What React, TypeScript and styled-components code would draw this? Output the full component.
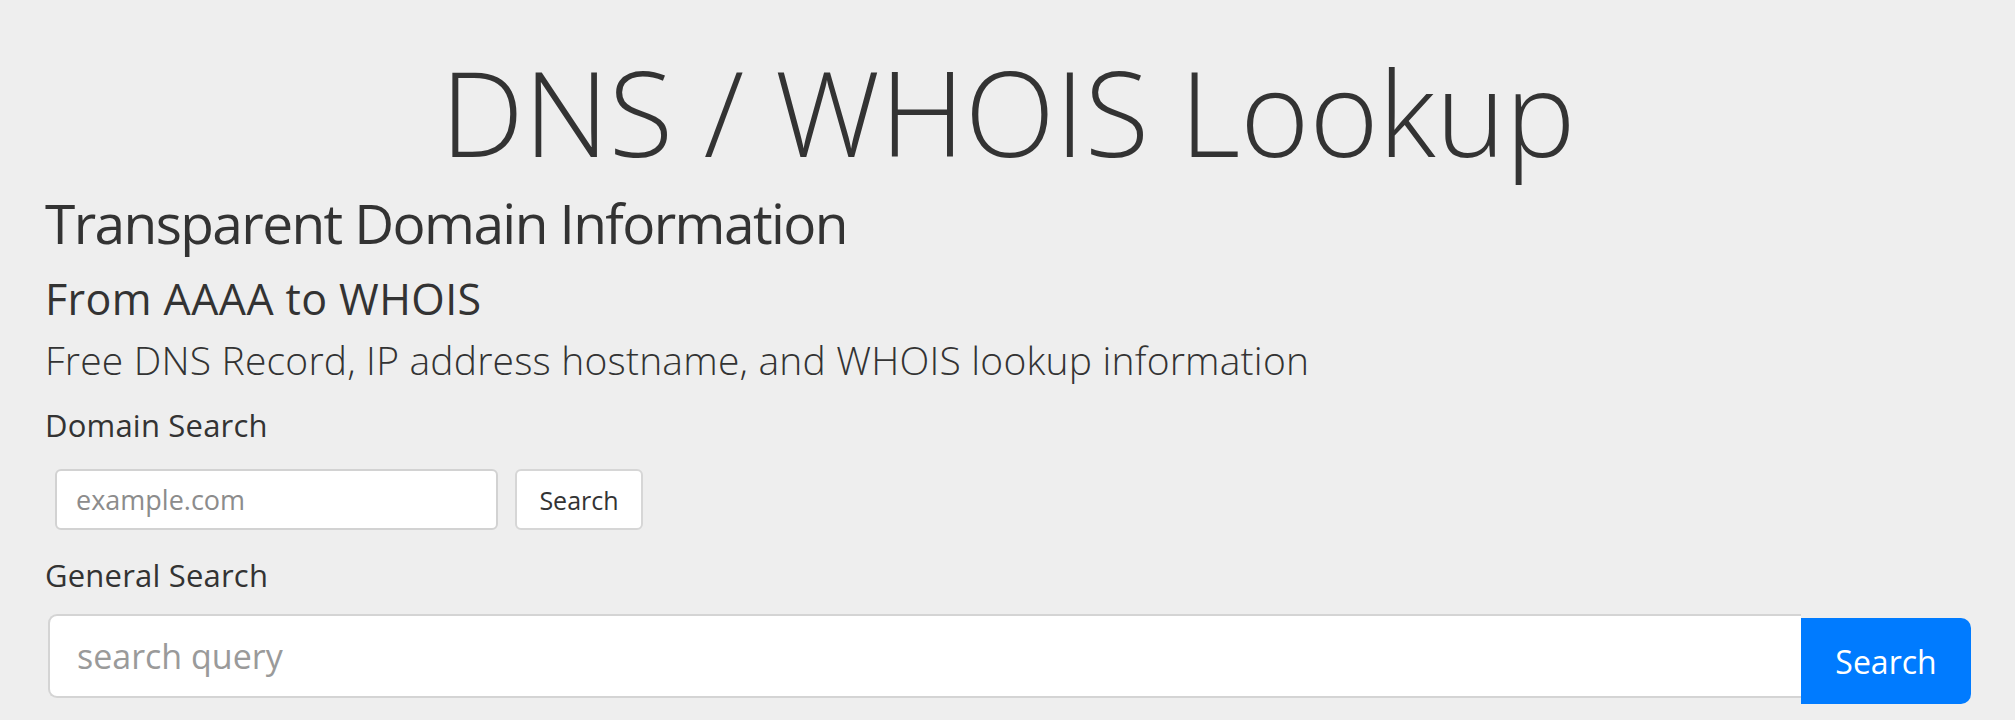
import { createGlobalStyle, styled } from 'styled-components';

const GlobalStyle = createGlobalStyle`
  html,
  body {
    margin: 0;
    padding: 0;
    background: #eeeeee;
  }

  body {
    font-family: 'Open Sans', 'Noto Sans', sans-serif;
    color: #333333;
  }

  * {
    box-sizing: border-box;
  }
`;

const Page = styled.main`
  padding: 47px 44px 0 45px;
`;

const Title = styled.h1`
  margin: 0;

  text-align: center;
  font-size: 118px;
  font-weight: 300;
  line-height: 130px;
`;

const Heading = styled.h2<{
  $size: number;
  $lineHeight: number;
  $gap: number;
  $weight?: number;
  $tracking?: number;
}>`
  margin: ${(p) => p.$gap}px 0 0;

  font-size: ${(p) => p.$size}px;
  font-weight: ${(p) => p.$weight ?? 400};
  line-height: ${(p) => p.$lineHeight}px;
  letter-spacing: ${(p) => p.$tracking ?? 0}px;
`;

const FieldLabel = styled.label<{ $gap: number }>`
  display: block;
  margin-top: ${(p) => p.$gap}px;

  font-size: 31px;
  line-height: 40px;
  letter-spacing: 0.2px;
`;

const DomainForm = styled.form`
  display: flex;
  align-items: stretch;
  gap: 17px;

  height: 61px;
  margin: 24px 0 0 10px;
`;

const DomainInput = styled.input`
  width: 443px;
  padding: 0 19px;

  border: 2px solid #d2d2d2;
  border-radius: 6px;
  background: #ffffff;

  font-family: inherit;
  font-size: 27px;
  color: #333333;

  &::placeholder {
    color: #8c8c8c;
  }
`;

const OutlineButton = styled.button`
  width: 128px;

  border: 2px solid #d6d6d6;
  border-radius: 6px;
  background: #ffffff;

  font-family: inherit;
  font-size: 25px;
  color: #333333;
`;

const GeneralForm = styled.form`
  display: flex;
  align-items: flex-start;

  margin: 19px 0 0 3px;
`;

const GeneralInput = styled.input`
  flex: 1;
  height: 84px;
  padding: 0 27px;

  border: 2px solid #d4d4d4;
  border-right: none;
  border-radius: 9px 0 0 9px;
  background: #ffffff;

  font-family: inherit;
  font-size: 34px;
  color: #333333;

  &::placeholder {
    color: #9a9a9a;
  }
`;

const PrimaryButton = styled.button`
  width: 170px;
  height: 86px;
  margin-top: 4px;

  border: none;
  border-radius: 0 10px 10px 0;
  background: #007bff;

  font-family: inherit;
  font-size: 32px;
  color: #ffffff;
`;

const App = () => {
  return (
    <>
      <GlobalStyle />
      <Page>
        <Title>DNS / WHOIS Lookup</Title>
        <Heading $size={55} $lineHeight={64} $gap={14} $tracking={-1.6}>
          Transparent Domain Information
        </Heading>
        <Heading as="h3" $size={43} $lineHeight={48} $gap={20} $tracking={0.4}>
          From AAAA to WHOIS
        </Heading>
        <Heading as="p" $size={39} $lineHeight={44} $gap={15} $weight={300} $tracking={0.2}>
          Free DNS Record, IP address hostname, and WHOIS lookup information
        </Heading>

        <FieldLabel $gap={23}>Domain Search</FieldLabel>
        <DomainForm onSubmit={(e) => e.preventDefault()}>
          <DomainInput placeholder="example.com" />
          <OutlineButton type="submit">Search</OutlineButton>
        </DomainForm>

        <FieldLabel $gap={25}>General Search</FieldLabel>
        <GeneralForm onSubmit={(e) => e.preventDefault()}>
          <GeneralInput placeholder="search query" />
          <PrimaryButton type="submit">Search</PrimaryButton>
        </GeneralForm>
      </Page>
    </>
  );
};

export default App;
